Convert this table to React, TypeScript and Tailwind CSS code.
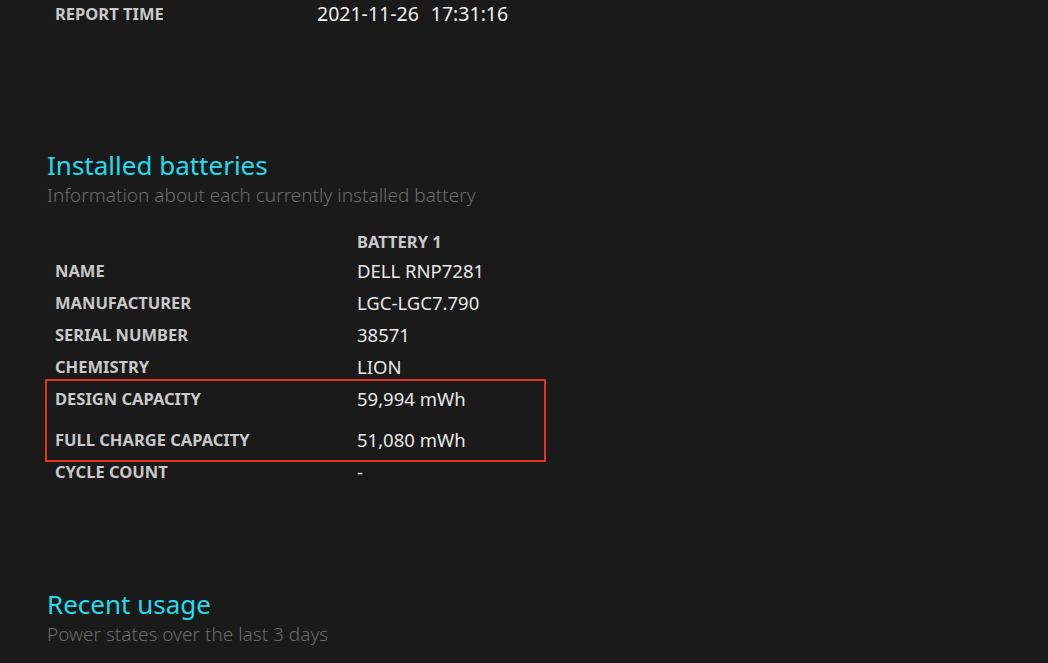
import React from 'react';

const font = { fontFamily: '"Segoe UI", "Noto Sans", "Open Sans", sans-serif' };

type Row = { label: string; value: string };

const Item: React.FC<Row> = ({ label, value }) => (
  <div className="flex h-[32px] items-center">
    <div className="w-[302px] text-[16.5px] leading-[24px] font-bold text-[#c9c9c9]">{label}</div>
    <div className="text-[18.5px] leading-[26px] text-[#e8e8e8]">{value}</div>
  </div>
);

export default function App() {
  return (
    <div className="min-h-screen w-full overflow-hidden bg-[#1a1a1a] pl-[47px]" style={font}>
      {/* report header */}
      <div className="flex h-[27px] items-center pl-[8px]">
        <div className="w-[262px] text-[16.5px] leading-[27px] font-bold text-[#c9c9c9]">REPORT TIME</div>
        <div className="flex gap-[12px] text-[19.5px] leading-[27px] text-[#f0f0f0]">
          <span>2021-11-26</span>
          <span>17:31:16</span>
        </div>
      </div>

      <div className="mt-[123px]">
        <h2 className="h-[30px] text-[26px] leading-[30px] text-[#22dcec]">Installed batteries</h2>
        <p className="h-[30px] text-[19px] leading-[30px] font-light text-[#6b6b6b]">
          Information about each currently installed battery
        </p>
      </div>

      <div className="mt-[19px] pl-[8px]">
        <div className="flex h-[26px] items-center">
          <div className="w-[302px]" />
          <div className="text-[16.5px] leading-[24px] font-bold text-[#c9c9c9]">BATTERY 1</div>
        </div>
        <Item label="NAME" value="DELL RNP7281" />
        <Item label="MANUFACTURER" value="LGC-LGC7.790" />
        <Item label="SERIAL NUMBER" value="38571" />
        <Item label="CHEMISTRY" value="LION" />
        <div className="relative -mt-[4px] -mb-[6px] -ml-[10px] w-[501px] border-2 border-[#e3321f] pt-[2px] pb-[4px] pl-[8px]">
          <Item label="DESIGN CAPACITY" value="59,994 mWh" />
          <div className="mt-[9px]">
            <Item label="FULL CHARGE CAPACITY" value="51,080 mWh" />
          </div>
        </div>
        <Item label="CYCLE COUNT" value="-" />
      </div>

      <div className="mt-[101px]">
        <h2 className="h-[30px] text-[26px] leading-[30px] text-[#22dcec]">Recent usage</h2>
        <p className="h-[30px] text-[19px] leading-[30px] font-light text-[#6b6b6b]">
          Power states over the last 3 days
        </p>
      </div>
    </div>
  );
}
